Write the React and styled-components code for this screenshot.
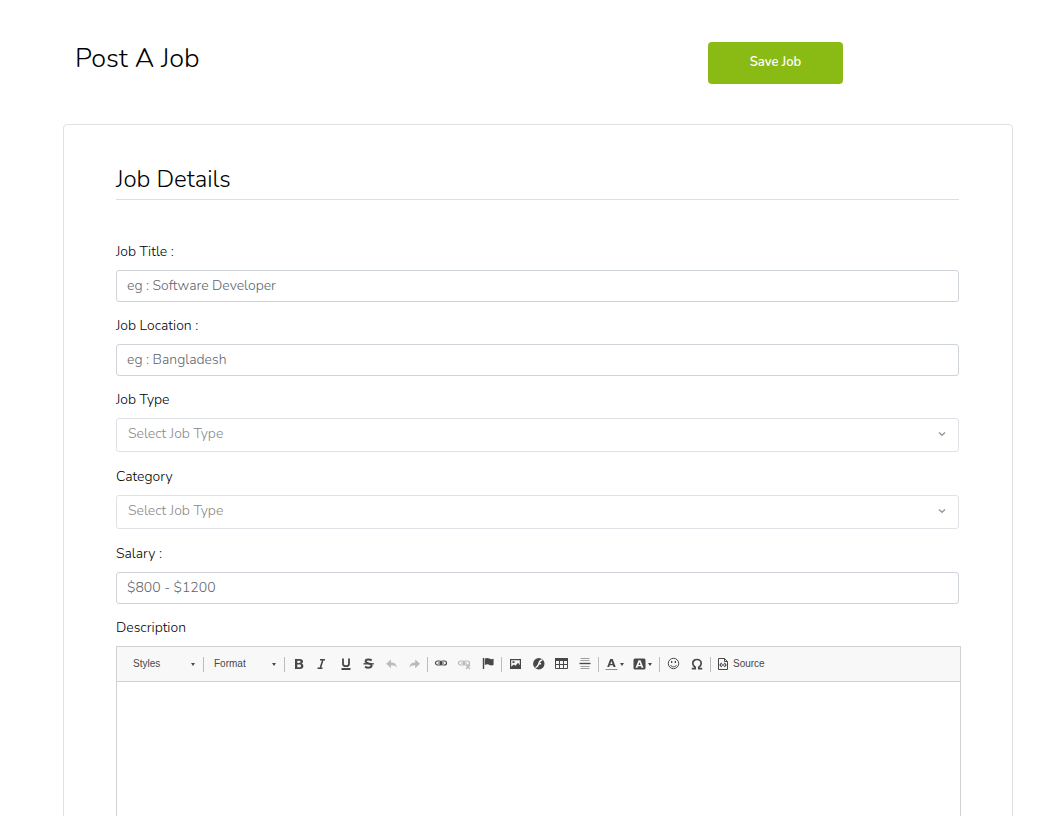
import React from "react";
import styled, { createGlobalStyle, css } from "styled-components";

const GlobalStyle = createGlobalStyle`
  *, *::before, *::after { box-sizing: border-box; }
  html { scrollbar-width: none; }
  body {
    margin: 0;
    background: #fff;
    color: #000;
    font-family: Nunito, Lato, sans-serif;
    font-size: 14px;
    font-weight: 300;
    line-height: 20px;
  }
  button, input, select, textarea { font: inherit; margin: 0; }
`;

const Page = styled.main`
  padding: 42px 41px 48px 63px;
`;

const Header = styled.header`
  display: grid;
  grid-template-columns: 8fr 2fr 2fr;
  align-items: start;
  margin-bottom: 40px;
`;

const HeaderCell = styled.div`
  padding: 0 12px;
`;

const Title = styled.h1`
  margin: 0;
  color: #000;
  font-size: 27px;
  font-weight: 300;
  line-height: 34px;
`;

const SaveButton = styled.button`
  display: block;
  width: 100%;
  height: 42px;
  padding: 0 0 2px;
  border: 0;
  border-radius: 4px;
  background: #8aba14;
  color: #fff;
  font-size: 13px;
  font-weight: 600;
`;

const Card = styled.form`
  padding: 37px 53px 48px 52px;
  border: 1px solid #dee2e6;
  border-radius: 4px;
`;

const SectionTitle = styled.h2`
  margin: 0 0 42px;
  padding-bottom: 3px;
  border-bottom: 1px solid #dedede;
  color: #000;
  font-size: 24px;
  font-weight: 300;
  line-height: 34px;
`;

const Field = styled.div`
  margin-bottom: ${(p) => (p.$loose ? 15 : 14)}px;
`;

const Label = styled.label`
  display: block;
  margin-bottom: 8px;
`;

const control = css`
  display: block;
  width: 100%;
  border-radius: 3px;
  background: #fff;
  outline: 0;
`;

const TextInput = styled.input`
  ${control}
  height: 32px;
  padding: 0 10px 2px;
  border: 1px solid #ced4da;
  color: #495057;
  &::placeholder { color: #5c656d; opacity: 1; }
`;

const SelectWrap = styled.div`
  position: relative;
`;

const SelectInput = styled.select`
  ${control}
  height: 34px;
  padding: 0 32px 2px 11px;
  border: 1px solid #dee2e6;
  appearance: none;
  color: #888;
`;

const Chevron = styled.svg`
  position: absolute;
  top: 11px;
  right: 12px;
  width: 10px;
  height: 10px;
  pointer-events: none;
`;

const Editor = styled.div`
  margin-right: -2px;
  border: 1px solid #d1d1d1;
`;

const Toolbar = styled.div`
  display: flex;
  align-items: center;
  height: 35px;
  padding-left: 8px;
  border-bottom: 1px solid #d1d1d1;
  background: #f8f8f8;
  color: #484848;
  font-family: "Liberation Sans", Arial, sans-serif;
  font-size: 10px;
  font-weight: 400;
`;

const Separator = styled.span`
  flex: none;
  width: 1px;
  height: 15px;
  margin: 0 2px;
  background: #bcbcbc;
`;

const Combo = styled.div`
  position: relative;
  width: 76px;
`;

const ComboSelect = styled.select`
  width: 100%;
  height: 24px;
  padding: 0 16px 0 8px;
  border: 0;
  appearance: none;
  background: transparent;
  color: #484848;
`;

const ComboCaret = styled.svg`
  position: absolute;
  top: 11px;
  right: 6px;
  width: 4px;
  height: 3px;
  pointer-events: none;
`;

const Tool = styled.button`
  display: flex;
  flex: none;
  align-items: center;
  justify-content: ${(p) => (p.$wide ? "flex-start" : "center")};
  gap: ${(p) => (p.$wide ? 1 : 2)}px;
  width: ${(p) => (p.$label ? "auto" : p.$wide ? "28px" : "23px")};
  height: 24px;
  padding: 0 ${(p) => (p.$wide || p.$label ? 2 : 0)}px;
  border: 0;
  background: transparent;
  color: #484848;
  opacity: ${(p) => (p.disabled ? 0.35 : 1)};
`;

const Glyph = styled.svg`
  flex: none;
  width: 16px;
  height: 16px;
`;

const EditArea = styled.textarea`
  display: block;
  width: 100%;
  height: 200px;
  padding: 20px;
  border: 0;
  outline: 0;
  resize: none;
  background: #fff;
`;

const line = { fill: "none", stroke: "currentColor" };

const chain = (
  <g {...line}>
    <rect x="1.5" y="5" width="6" height="4" rx="2" strokeWidth="1.2" />
    <rect x="6.5" y="5" width="6" height="4" rx="2" strokeWidth="1.2" />
    <path d="M4 7h6" />
  </g>
);

const icons = {
  bold: <path fill="currentColor" fillRule="evenodd" d="M4 3h4.5C11 3 12 4.1 12 5.6c0 1-.5 1.7-1.4 2.1 1.2.3 1.8 1.2 1.8 2.3 0 1.8-1.3 3-3.7 3H4V3Zm2.3 1.7v2.2h1.6c1.2 0 1.7-.4 1.7-1.1s-.5-1.1-1.7-1.1H6.3Zm0 3.9v2.6h1.9c1.2 0 1.8-.5 1.8-1.3 0-.9-.6-1.3-1.8-1.3H6.3Z" />,
  italic: <path {...line} strokeWidth="1.6" d="M6 3.8h5M3.5 12.2h5M8.8 4l-2.5 8" />,
  underline: <path {...line} strokeWidth="1.8" d="M6 2.5v5.2c0 1.800 1 2.500 3 2.500s3-.7 3-2.500V2.500M4.500 13h9" />,
  strike: (
    <g {...line}>
      <path strokeWidth="2" d="M11.7 4.3c-1.900-1.200-6.100-1.300-6.100 1 0 2.500 6 1.700 6 4.300 0 2.400-4.400 2.600-6.500 1" />
      <path strokeWidth="1.4" d="M3.500 7.800h10.300" />
    </g>
  ),
  undo: <path fill="currentColor" d="M8 3.5v2.9c3.500 0 5.600 1.900 5.900 5.300-1.300-1.900-3.100-2.500-5.900-2.400v2.900L3.200 7.800 8 3.500Z" />,
  redo: <path fill="currentColor" d="M9.200 3.5v2.9c-3.500 0-5.600 1.900-5.900 5.300 1.300-1.900 3.100-2.500 5.900-2.400v2.900L14 7.800 9.200 3.500Z" />,
  link: chain,
  unlink: (
    <>
      {chain}
      <path {...line} strokeWidth="1.3" d="m9 9 4 4m0-4-4 4" />
    </>
  ),
  flag: <path fill="currentColor" d="M2.8 2h1.4v11H2.800V2Zm2 .6c2-1 3.600-.6 5 .1 1.300.6 2.400.7 3.800.1v6c-1.400.8-2.700.7-4 .1-1.500-.7-3-.9-4.800 0V2.600Z" />,
  image: <path fill="currentColor" fillRule="evenodd" d="M2 3h11v10H2V3Zm1.200 1.200v6.600l2.600-2.300 1.700 1.200L10 6.700l1.800 2.500v-5H3.200Zm1.300 1h2v1.700h-2V5.200Z" />,
  flash: (
    <>
      <circle cx="7.8" cy="7.8" r="5.7" fill="currentColor" />
      <path fill="none" stroke="#f8f8f8" strokeWidth="1.500" d="M11.300 4c-3 0-3 2.800-3.800 4.500-.7 1.800-1.400 2.800-3 3M7.300 7.700h2.800" />
    </>
  ),
  table: (
    <>
      <path fill="currentColor" d="M1 2h13v3H1z" />
      <path {...line} d="M1.500 4v8.500h12V4M1.500 8.500h12M5.500 5v7.500M9.500 5v7.500" />
    </>
  ),
  rule: (
    <>
      <path stroke="currentColor" opacity=".5" d="M3.500 2.500h9M3.500 4.500h9M3.500 10.500h9M3.500 12.500h9" />
      <path stroke="currentColor" strokeWidth="1.400" d="M2.500 7.500h11" />
    </>
  ),
  textColor: (
    <>
      <path fill="currentColor" fillRule="evenodd" d="M7.200 3h2.500l3 8h-2.200l-.6-1.700H6.800L6.200 11h-2l3-8Zm1.200 2L7.300 7.900h2.100L8.400 5Z" />
      <path stroke="currentColor" opacity=".6" d="M2.500 13.500h12" />
    </>
  ),
  fillColor: <path fill="currentColor" fillRule="evenodd" d="M4 2.500h9q1.500 0 1.500 1.500v8q0 1.500-1.500 1.500H4q-1.500 0-1.500-1.500V4Q2.500 2.500 4 2.500ZM7.500 4.200l-3 7.600h2l.5-1.500h3l.5 1.500h2l-3-7.600h-2Zm1 2 1 2.700h-2l1-2.700Z" />,
  smile: (
    <>
      <circle {...line} cx="7.500" cy="7.500" r="5.200" />
      <path {...line} d="M4.500 9c1 2.400 5 2.400 6 0" />
      <path fill="currentColor" d="M5 5h1.300v2H5zM8.700 5H10v2H8.700z" />
    </>
  ),
  omega: <path {...line} strokeWidth="1.700" d="M2.800 12.600h3.400v-1.300C4.600 10.300 3.800 9 3.800 7.300 3.800 5 5.500 3.500 8 3.500s4.200 1.500 4.200 3.800c0 1.700-.8 3-2.400 4v1.300h3.400" />,
  source: (
    <>
      <path {...line} d="M3.500 2.500h6l3 3v8h-9v-11ZM9.500 2.500v3h3" />
      <path {...line} strokeWidth="1.200" d="M6.700 7 5 8.900l1.700 1.900M9.300 7 11 8.900l-1.700 1.900" />
      <path fill="currentColor" d="M7.300 8h1.400v2H7.300z" />
    </>
  ),
};

const Icon = ({ name }) => (
  <Glyph viewBox="0 0 16 16" aria-hidden="true">{icons[name]}</Glyph>
);

const caretPath = <path d="M0 0h4L2 3Z" fill="#484848" />;

const toolGroups = [
  [
    { name: "bold", title: "Bold" },
    { name: "italic", title: "Italic" },
    { name: "underline", title: "Underline" },
    { name: "strike", title: "Strikethrough" },
    { name: "undo", title: "Undo", disabled: true },
    { name: "redo", title: "Redo", disabled: true },
  ],
  [
    { name: "link", title: "Link" },
    { name: "unlink", title: "Unlink", disabled: true },
    { name: "flag", title: "Anchor" },
  ],
  [
    { name: "image", title: "Image" },
    { name: "flash", title: "Flash" },
    { name: "table", title: "Table" },
    { name: "rule", title: "Horizontal line" },
  ],
  [
    { name: "textColor", title: "Text color", menu: true },
    { name: "fillColor", title: "Background color", menu: true },
  ],
  [
    { name: "smile", title: "Smiley" },
    { name: "omega", title: "Special character" },
  ],
  [{ name: "source", title: "Source", label: "Source" }],
];

function ToolCombo({ label }) {
  return (
    <Combo>
      <ComboSelect aria-label={label}>
        <option>{label}</option>
      </ComboSelect>
      <ComboCaret viewBox="0 0 4 3" aria-hidden="true">{caretPath}</ComboCaret>
    </Combo>
  );
}

function TextField({ id, label, placeholder }) {
  return (
    <Field>
      <Label htmlFor={id}>{label}</Label>
      <TextInput id={id} type="text" placeholder={placeholder} />
    </Field>
  );
}

function SelectField({ id, label, placeholder }) {
  return (
    <Field $loose>
      <Label htmlFor={id}>{label}</Label>
      <SelectWrap>
        <SelectInput id={id}>
          <option>{placeholder}</option>
        </SelectInput>
        <Chevron viewBox="0 0 10 10" aria-hidden="true">
          <path d="M2 3.500 5 6.300 8 3.500" fill="none" stroke="#999" strokeWidth="1.500" />
        </Chevron>
      </SelectWrap>
    </Field>
  );
}

export default function App() {
  return (
    <>
      <GlobalStyle />
      <Page>
        <Header>
          <HeaderCell><Title>Post A Job</Title></HeaderCell>
          <HeaderCell><SaveButton type="submit" form="job-form">Save Job</SaveButton></HeaderCell>
        </Header>
        <Card id="job-form" onSubmit={(e) => e.preventDefault()}>
          <SectionTitle>Job Details</SectionTitle>
          <TextField id="title" label="Job Title :" placeholder="eg : Software Developer" />
          <TextField id="location" label="Job Location :" placeholder="eg : Bangladesh" />
          <SelectField id="type" label="Job Type" placeholder="Select Job Type" />
          <SelectField id="category" label="Category" placeholder="Select Job Type" />
          <TextField id="salary" label="Salary :" placeholder="$800 - $1200" />
          <Label htmlFor="description">Description</Label>
          <Editor>
            <Toolbar role="toolbar" aria-label="Editor toolbar">
              <ToolCombo label="Styles" />
              <Separator />
              <ToolCombo label="Format" />
              {toolGroups.map((group) => (
                <React.Fragment key={group[0].name}>
                  <Separator />
                  {group.map((t) => (
                    <Tool key={t.name} type="button" title={t.title} disabled={t.disabled} $wide={t.menu} $label={t.label}>
                      <Icon name={t.name} />
                      {t.menu && <svg width="4" height="3" viewBox="0 0 4 3" aria-hidden="true">{caretPath}</svg>}
                      {t.label}
                    </Tool>
                  ))}
                </React.Fragment>
              ))}
            </Toolbar>
            <EditArea id="description" />
          </Editor>
        </Card>
      </Page>
    </>
  );
}
